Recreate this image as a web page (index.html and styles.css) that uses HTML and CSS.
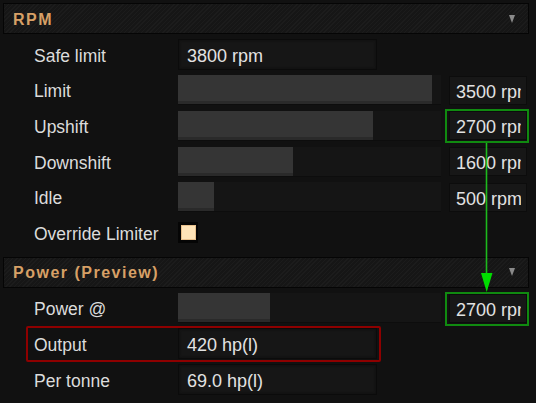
FILE: index.html
```html
<!DOCTYPE html>
<html>
<head>
<meta charset="utf-8">
<link rel="stylesheet" href="styles.css">
</head>
<body>
<div class="panel">
  <section class="section">
    <div class="section-header">
      <span class="section-title">RPM</span>
      <span class="caret"></span>
    </div>
    <div class="rows">
      <div class="row">
        <span class="label">Safe limit</span>
        <div class="input">3800 rpm</div>
      </div>
      <div class="row">
        <span class="label">Limit</span>
        <div class="track"><div class="fill" style="width:254px"></div></div>
        <div class="value"><span class="value-text">3500 rpm</span></div>
      </div>
      <div class="row">
        <span class="label">Upshift</span>
        <div class="track"><div class="fill" style="width:195px"></div></div>
        <div class="value"><span class="value-text">2700 rpm</span></div>
      </div>
      <div class="row">
        <span class="label">Downshift</span>
        <div class="track"><div class="fill" style="width:115px"></div></div>
        <div class="value"><span class="value-text">1600 rpm</span></div>
      </div>
      <div class="row">
        <span class="label">Idle</span>
        <div class="track"><div class="fill" style="width:36px"></div></div>
        <div class="value"><span class="value-text">500 rpm</span></div>
      </div>
      <div class="row">
        <span class="label">Override Limiter</span>
        <div class="checkbox"><span class="check-inner"></span></div>
      </div>
    </div>
  </section>
  <section class="section section-second">
    <div class="section-header">
      <span class="section-title">Power (Preview)</span>
      <span class="caret"></span>
    </div>
    <div class="rows">
      <div class="row">
        <span class="label">Power @</span>
        <div class="track"><div class="fill" style="width:92px"></div></div>
        <div class="value"><span class="value-text">2700 rpm</span></div>
      </div>
      <div class="row">
        <span class="label">Output</span>
        <div class="input">420 hp(l)</div>
      </div>
      <div class="row">
        <span class="label">Per tonne</span>
        <div class="input">69.0 hp(l)</div>
      </div>
    </div>
  </section>
</div>
<div class="mark mark-green mark-upshift"></div>
<div class="mark mark-green mark-power"></div>
<div class="mark mark-red mark-output"></div>
<svg class="arrow" width="536" height="403" viewBox="0 0 536 403">
  <line x1="486.5" y1="143" x2="486.5" y2="276" stroke="#1dba1d" stroke-width="1.6"/>
  <polygon points="481,273 492.5,273 486.7,292" fill="#00dd00"/>
</svg>
</body>
</html>
```
FILE: styles.css
```css
html, body {
  margin: 0;
  padding: 0;
  background: #111111;
}
body {
  position: relative;
  width: 536px;
  height: 403px;
  overflow: hidden;
  font-family: "Liberation Sans", Arial, sans-serif;
  color: #dedede;
}
.panel {
  padding: 3px 7px 0 3px;
}
.section-header {
  height: 31px;
  box-sizing: border-box;
  border: 1px solid #050505;
  background: repeating-linear-gradient(135deg, #1c1c1c 0 1px, #161616 1px 3px);
  display: flex;
  align-items: center;
  justify-content: space-between;
  padding: 2px 13px 0 9px;
}
.section-title {
  font-weight: bold;
  font-size: 16px;
  letter-spacing: 1.5px;
  color: #d7a066;
}
.caret {
  width: 0;
  height: 0;
  margin-bottom: 2px;
  border-left: 3.5px solid transparent;
  border-right: 3.5px solid transparent;
  border-top: 8px solid #8a8a8a;
}
.rows {
  margin-top: 3px;
}
.section-second {
  margin-top: 6px;
}
.row {
  height: 35.6px;
  display: grid;
  grid-template-columns: 136px 263px 78px;
  column-gap: 8px;
  align-items: center;
  padding-left: 31px;
}
.label {
  font-size: 17.5px;
  color: #dcdcdc;
  white-space: nowrap;
  padding-top: 3px;
}
.input {
  width: 199px;
  height: 31px;
  box-sizing: border-box;
  background: #161616;
  border: 1px solid #0b0b0b;
  box-shadow: inset 0 0 3px #0d0d0d;
  font-size: 18px;
  line-height: 32px;
  padding-left: 8px;
  color: #e2e2e2;
}
.track {
  height: 29px;
  background: #151515;
  border-bottom: 1px solid #0d0d0d;
}
.fill {
  height: 100%;
  box-sizing: border-box;
  background: #353535;
  border-bottom: 3px solid #2a2a2a;
}
.value {
  height: 29px;
  box-sizing: border-box;
  background: #171717;
  border: 1px solid #0c0c0c;
  font-size: 18px;
  line-height: 30px;
  padding-left: 6px;
  color: #e2e2e2;
}
.value-text {
  display: block;
  height: 27px;
  width: 65px;
  white-space: nowrap;
  overflow: hidden;
}
.checkbox {
  width: 20px;
  height: 21px;
  box-sizing: border-box;
  background: #050505;
  display: flex;
  align-items: center;
  justify-content: center;
}
.check-inner {
  width: 15px;
  height: 15px;
  box-sizing: border-box;
  background: #ffe4b8;
  border: 1px solid #e8c08c;
}
.mark {
  position: absolute;
  box-sizing: border-box;
}
.mark-green {
  border: 2px solid #108a10;
  width: 84px;
  height: 34px;
}
.mark-upshift {
  left: 445px;
  top: 109px;
}
.mark-power {
  left: 445px;
  top: 292px;
}
.mark-red {
  border: 2px solid #8e0000;
  border-radius: 2px;
}
.mark-output {
  left: 26px;
  top: 326px;
  width: 355px;
  height: 36px;
}
.arrow {
  position: absolute;
  left: 0;
  top: 0;
}
```
